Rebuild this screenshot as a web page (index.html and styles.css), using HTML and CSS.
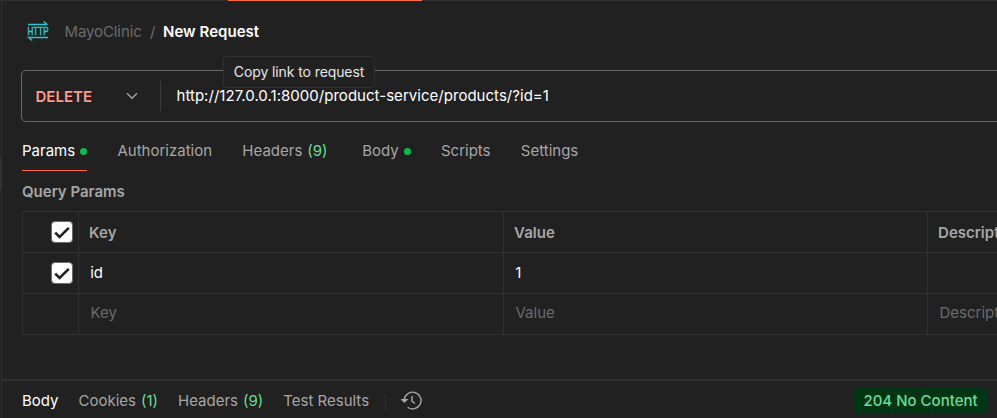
FILE: index.html
```html
<!DOCTYPE html>
<html lang="en">
<head>
<meta charset="utf-8">
<title>New Request</title>
<link rel="stylesheet" href="styles.css">
</head>
<body>
<div class="app">
  <div class="gutter"><span class="gutter-thumb"></span></div>
  <main class="pane">
    <div class="tab-strip"><span class="tab-active"></span></div>
    <header class="crumbs">
      <svg class="http-icon" width="22" height="22" viewBox="0 0 22 22">
        <path d="M1 3.5H20.5M16.6 .4L20.3 3.5M21 16.5H1.5L5.2 19.6" fill="none" stroke="#2fc3d3" stroke-width="1.3"/>
        <text x="0.5" y="14" textLength="21" lengthAdjust="spacingAndGlyphs">HTTP</text>
      </svg>
      <span class="crumb-parent">MayoClinic</span>
      <span class="crumb-sep">/</span>
      <span class="crumb-current">New Request</span>
    </header>
    <div class="url-bar">
      <span class="method">DELETE</span>
      <svg class="chevron" width="12" height="8" viewBox="0 0 12 8"><path d="M1 1.2L6 6.2L11 1.2" fill="none" stroke="#a6a6a6" stroke-width="1.4"/></svg>
      <span class="url-divider"></span>
      <span class="url">http://127.0.0.1:8000/product-service/products/?id=1</span>
      <span class="tooltip">Copy link to request</span>
    </div>
    <nav class="tabs">
      <span class="tab selected">Params<i class="dot"></i></span>
      <span class="tab">Authorization</span>
      <span class="tab counted">Headers<b class="count">(9)</b></span>
      <span class="tab">Body<i class="dot"></i></span>
      <span class="tab">Scripts</span>
      <span class="tab">Settings</span>
    </nav>
    <h2 class="section-title">Query Params</h2>
    <div class="grid">
      <div class="cell check"><span class="box"><svg width="16" height="13" viewBox="0 0 16 13"><path d="M1.2 6.6L5.6 11L14.8 1.9" fill="none" stroke="#212121" stroke-width="2.6"/></svg></span></div>
      <div class="cell head">Key</div>
      <div class="cell head">Value</div>
      <div class="cell head">Description</div>
      <div class="cell check"><span class="box"><svg width="16" height="13" viewBox="0 0 16 13"><path d="M1.2 6.6L5.6 11L14.8 1.9" fill="none" stroke="#212121" stroke-width="2.6"/></svg></span></div>
      <div class="cell">id</div>
      <div class="cell">1</div>
      <div class="cell"></div>
      <div class="cell"></div>
      <div class="cell hint">Key</div>
      <div class="cell hint">Value</div>
      <div class="cell hint">Description</div>
    </div>
    <footer class="response">
      <span class="res-tab selected-res">Body</span>
      <span class="res-tab">Cookies<b class="count">(1)</b></span>
      <span class="res-tab">Headers<b class="count">(9)</b></span>
      <span class="res-tab">Test Results</span>
      <span class="res-divider"></span>
      <svg class="history" width="22" height="20" viewBox="0 0 22 20" fill="none" stroke="#a6a6a6" stroke-width="1.4">
        <path d="M3.2 10.5V9.5A8.4 8.4 0 1 1 6.6 16.3M.8 8.6H5.8L3.3 11ZM11 5V10.3L14 12.3"/>
      </svg>
      <span class="status">204 No Content</span>
    </footer>
  </main>
</div>
</body>
</html>
```

FILE: styles.css
```css
* { box-sizing: border-box; }
body {
  margin: 0;
  background: #212121;
  color: #fff;
  font: 15px/20px Inter, "Liberation Sans", sans-serif;
  overflow: hidden;
}
.app { display: flex; width: 997px; height: 418px; overflow: hidden; }
.gutter { width: 2px; border-right: 1px solid #303030; padding-top: 156px; flex: none; }
.gutter-thumb { display: block; width: 1px; height: 35px; background: #303030; }
.pane { width: 995px; flex: none; display: flex; flex-direction: column; overflow: hidden; }
.tab-strip { height: 1px; background: #303030; flex: none; }
.tab-active { display: block; width: 194px; height: 1px; margin-left: 226px; background: #ff6c37; }
.crumbs { display: flex; align-items: center; height: 62px; padding-left: 25px; flex: none; }
.http-icon { margin-right: 15.5px; overflow: visible; }
.http-icon text { font: 11.5px "Liberation Sans", sans-serif; fill: #2fc3d3; stroke: #2fc3d3; stroke-width: 0.5px; }
.crumb-parent { color: #6b6b6b; width: 85.5px; letter-spacing: -0.1px; }
.crumb-sep { color: #6b6b6b; width: 13px; }
.crumb-current { font-weight: 600; letter-spacing: 0.03px; }
.url-bar {
  position: relative;
  display: flex;
  align-items: center;
  width: 1000px;
  height: 52px;
  margin: 7px 0 0 19px;
  border: 1px solid #6b6b6b;
  border-radius: 5px;
  flex: none;
}
.method { width: 90px; padding: 1px 0 0 13.5px; color: #ff9a8a; font-weight: 600; }
.chevron { margin-left: 14px; }
.url-divider { width: 1px; height: 30px; margin: 0 15.5px 0 22px; background: #3b3b3b; }
.url { letter-spacing: 0.03px; }
.tooltip {
  position: absolute;
  left: 201px;
  top: -15px;
  width: 152px;
  height: 32px;
  border: 1px solid #303030;
  border-radius: 3px;
  background: #212121;
  color: #e6e6e6;
  font-size: 14px;
  letter-spacing: -0.1px;
  line-height: 30px;
  text-align: center;
}
.tabs { display: flex; gap: 30.3px; height: 49px; padding: 18px 0 0 20px; flex: none; }
.tab { display: flex; align-items: center; height: 31px; padding-bottom: 9px; color: #a6a6a6; }
.selected { color: #fff; border-bottom: 1px solid #ff6c37; padding-bottom: 8px; }
.counted { margin-right: 4.3px; }
.dot { width: 7px; height: 7px; margin-left: 5px; border-radius: 50%; background: #0cbb52; }
.count { margin-left: 5px; font-weight: 400; color: #6bdd9a; }
.section-title { margin: 11px 0 9px 20px; color: #a6a6a6; font-size: 15px; line-height: 20px; font-weight: 600; }
.grid {
  display: grid;
  grid-template-columns: 56px 425px 424px 300px;
  grid-template-rows: repeat(3, 41px);
  width: 1206px;
  margin-left: 20px;
  border-top: 1px solid #303030;
  border-left: 1px solid #303030;
  flex: none;
}
.cell { display: flex; align-items: center; padding-left: 11.2px; border-right: 1px solid #303030; border-bottom: 1px solid #303030; }
.head { padding-left: 10.1px; color: #a6a6a6; font-weight: 600; padding-top: 2px; }
.hint { padding-left: 11.5px; color: #6b6b6b; padding-bottom: 2px; }
.check { padding-left: 28px; }
.box {
  display: flex;
  align-items: center;
  justify-content: center;
  width: 22px;
  height: 22px;
  border: 1px solid #6b6b6b;
  border-radius: 4px;
  background: #fff;
}
.response { display: flex; align-items: center; height: 39px; padding: 3px 9px 0 20px; margin-top: auto; border-top: 2px solid #303030; flex: none; }
.res-tab { margin-right: 20px; color: #a6a6a6; }
.selected-res { color: #fff; }
.res-divider { width: 1px; height: 15px; margin: 0 15px 0 -4.5px; background: #303030; }
.status { margin-left: auto; width: 135px; height: 26px; border-radius: 5px; background: #003514; color: #6bdd9a; font-weight: 500; line-height: 26px; text-align: center; }
```
